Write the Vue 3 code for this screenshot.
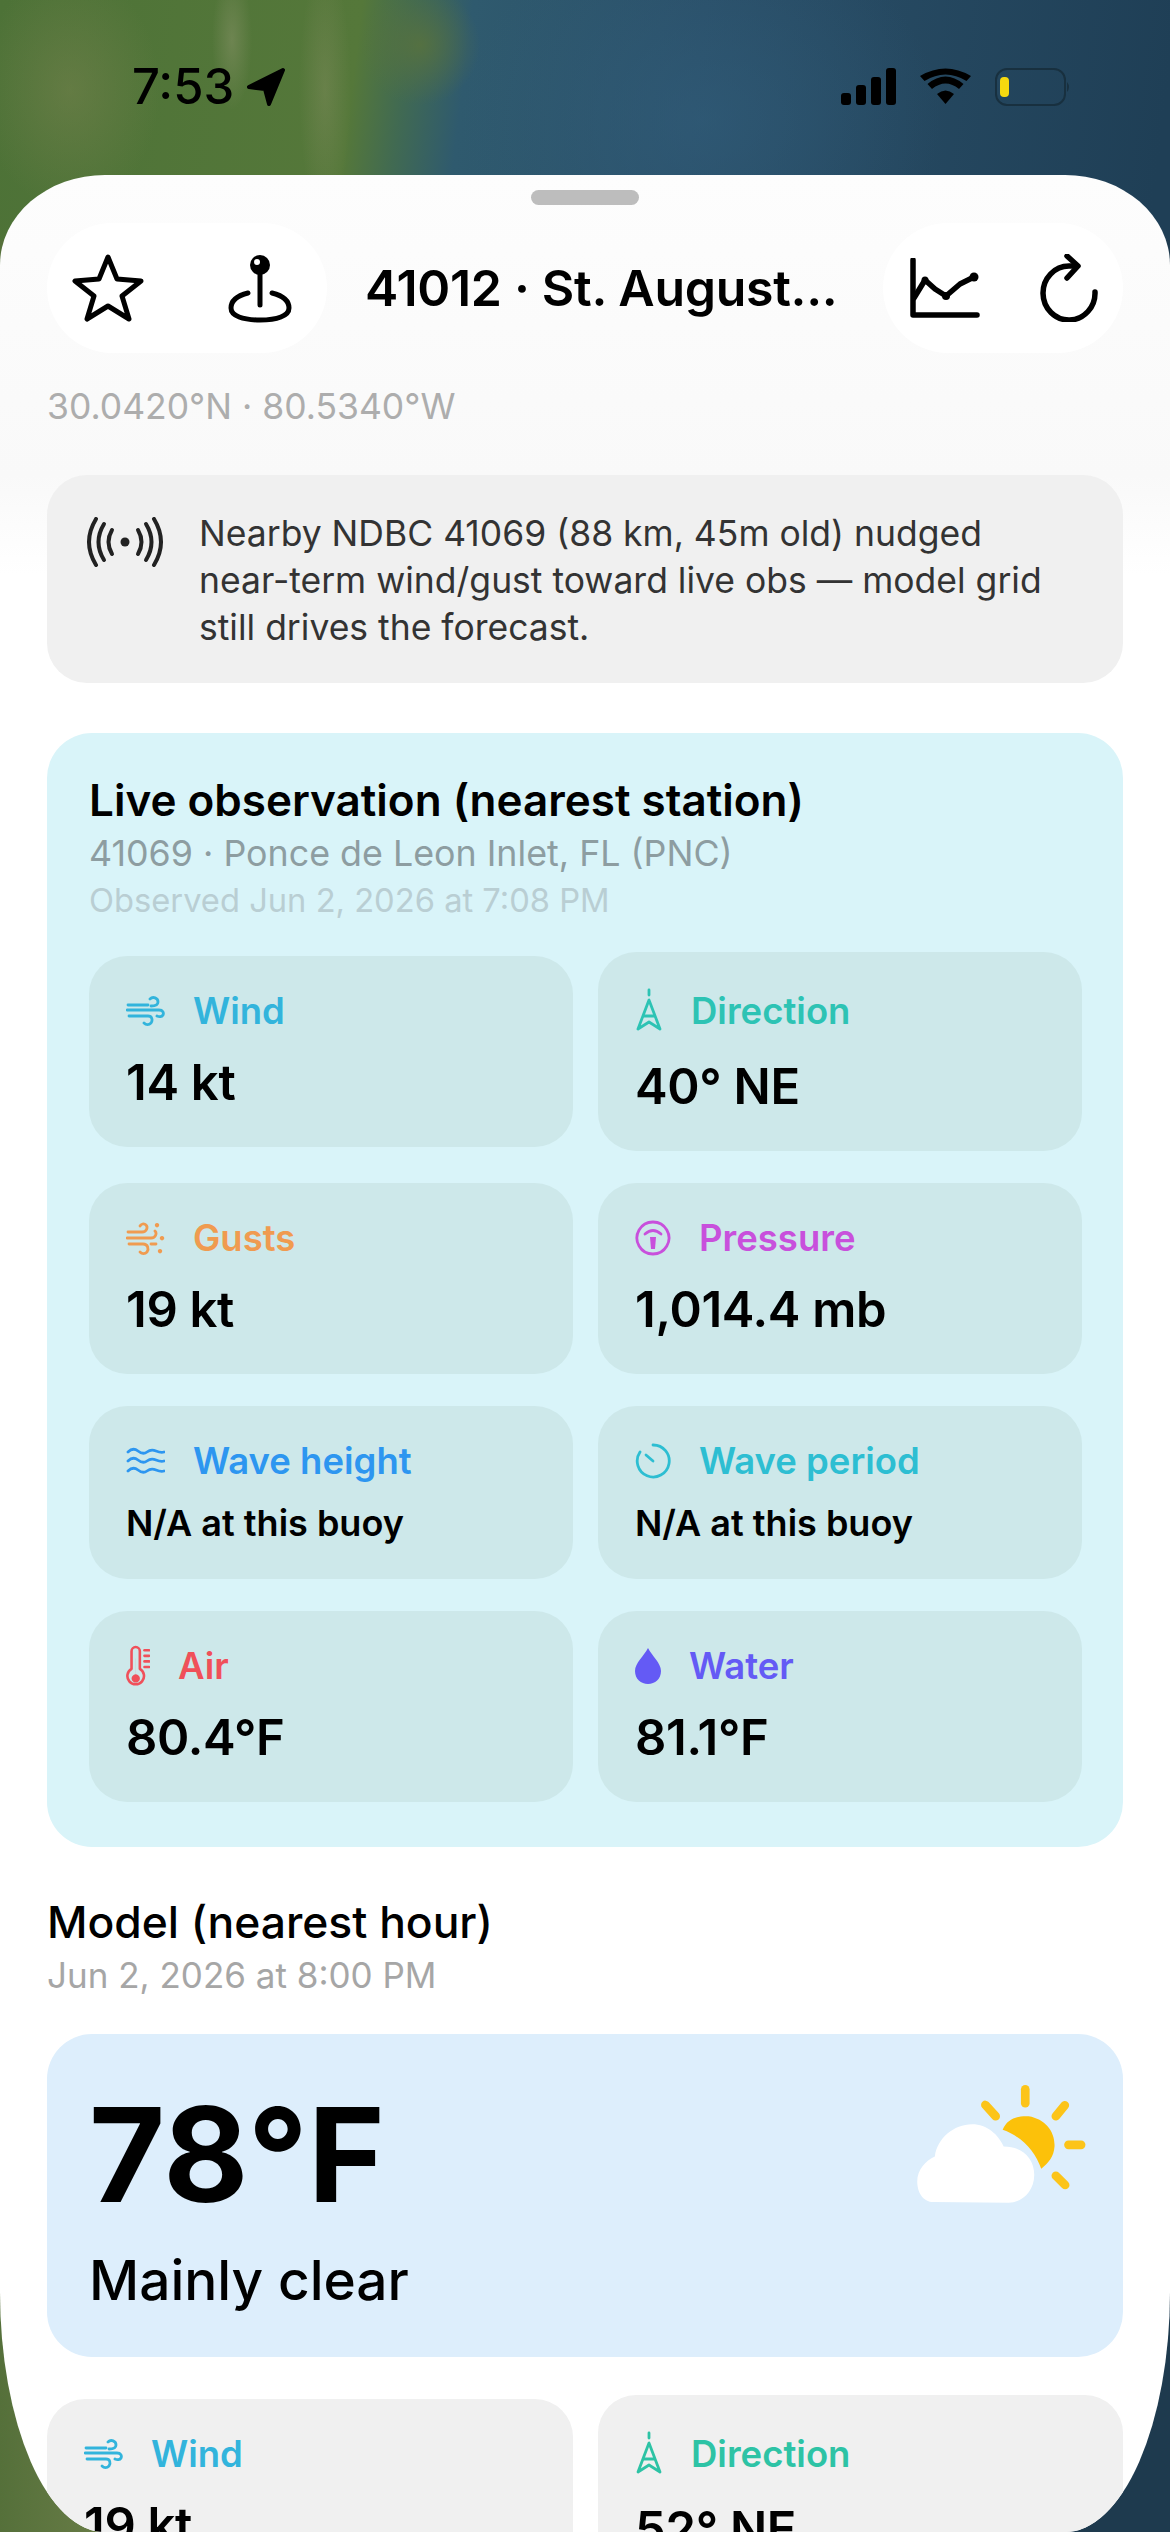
<template>
  <div class="phone">
    <div class="status">
      <div class="clock">
        <span>7:53</span>
        <svg class="arrow" viewBox="0 0 40 40"><path d="M37 3 L3 20 L19 22 L23 37 Z" stroke="#000" stroke-width="4" stroke-linejoin="round" /></svg>
      </div>
      <div class="status-right">
        <svg class="signal" viewBox="0 0 55 37">
          <rect x="0" y="25" width="10" height="12" rx="3" />
          <rect x="15" y="17" width="10" height="20" rx="3" />
          <rect x="30" y="9" width="10" height="28" rx="3" />
          <rect x="45" y="0" width="10" height="37" rx="3" />
        </svg>
        <svg class="wifi" viewBox="0 0 51 36">
          <path d="M25.5 36 L17 26 Q25.5 19 34 26 Z" />
          <path d="M12 20 L7.500 15 Q25.500 0 43.500 15 L39 20 Q25.500 9 12 20 Z" transform="translate(0 1)" />
          <path d="M4.500 12 L0 7 Q25.500 -8 51 7 L46.500 12 Q25.500 -1 4.500 12 Z" transform="translate(0 1)" />
        </svg>
        <svg class="battery" viewBox="0 0 76 38">
          <rect x="1" y="1" width="69" height="36" rx="11" fill="none" stroke="#18303f" stroke-width="2" />
          <rect x="5" y="9" width="9" height="20" rx="4" fill="#f6d90f" />
          <path d="M72 14 Q76 19 72 24 Z" fill="#18303f" />
        </svg>
      </div>
    </div>

    <div class="sheet">
      <div class="handle"></div>

      <div class="header">
        <div class="pill pill-left">
          <svg class="star" viewBox="0 0 72 68" fill="none" stroke="#000" stroke-width="5" stroke-linejoin="round">
            <path d="M36 3 L45 25 L69 27 L50 42 L57 65 L36 52 L15 65 L22 42 L3 27 L27 25 Z" />
          </svg>
          <svg class="pin" viewBox="0 0 64 70" fill="none" stroke="#000" stroke-width="5" stroke-linecap="round">
            <path d="M32 20 V52" />
            <path d="M20 40 C8 43 3 48 3 55 C3 63 15 67 32 67 C49 67 61 63 61 55 C61 48 56 43 44 40" />
            <circle cx="32" cy="12" r="10" fill="#000" stroke="none" />
            <circle cx="29" cy="9" r="3" fill="#fff" stroke="none" />
          </svg>
        </div>
        <div class="title">41012 · St. August...</div>
        <div class="pill pill-right">
          <svg class="chart" viewBox="0 0 70 60" fill="none" stroke="#000" stroke-width="5.500" stroke-linecap="round" stroke-linejoin="round">
            <path d="M3 2 V57 H67" />
            <path d="M4 40 L15 22 L25 31 L36 38 L50 26 L64 19" />
            <circle cx="36" cy="38" r="4" fill="#000" stroke="none" />
            <circle cx="64" cy="19" r="4.500" fill="#000" stroke="none" />
            <circle cx="15" cy="22" r="3.500" fill="#000" stroke="none" />
          </svg>
          <svg class="refresh" viewBox="0 0 58 68" fill="none" stroke="#000" stroke-width="5.500" stroke-linecap="round" stroke-linejoin="round">
            <path d="M55 38 A26 27 0 1 1 29 12 H36" />
            <path d="M27 2 L38 12 L27 24" />
          </svg>
        </div>
      </div>

      <div class="coords">30.0420°N · 80.5340°W</div>

      <div class="notice">
        <svg class="radio" viewBox="0 0 80 50" fill="none" stroke="#222" stroke-width="4" stroke-linecap="round">
          <path d="M11 2 Q-3 25 11 48" />
          <path d="M19 7 Q8 25 19 43" />
          <path d="M27 13 Q20 25 27 37" />
          <path d="M69 2 Q83 25 69 48" />
          <path d="M61 7 Q72 25 61 43" />
          <path d="M53 13 Q60 25 53 37" />
          <circle cx="40" cy="25" r="4.500" fill="#222" stroke="none" />
        </svg>
        <p>Nearby NDBC 41069 (88 km, 45m old) nudged near-term wind/gust toward live obs — model grid still drives the forecast.</p>
      </div>

      <section class="live">
        <h2>Live observation (nearest station)</h2>
        <div class="live-sub">41069 · Ponce de Leon Inlet, FL (PNC)</div>
        <div class="live-time">Observed Jun 2, 2026 at 7:08 PM</div>
        <div class="grid">
          <div v-for="t in liveTiles" :key="t.label" class="tile" :class="{ small: t.small }">
            <div class="tile-label" :style="{ color: t.color }">
              <svg :viewBox="icons[t.icon].box" :style="{ width: icons[t.icon].w + 'px', height: icons[t.icon].h + 'px' }" fill="none" stroke="currentColor" stroke-width="2.800" stroke-linecap="round" stroke-linejoin="round">
                <path v-for="d in icons[t.icon].lines" :key="d" :d="d" />
                <path v-for="d in icons[t.icon].solid" :key="d" :d="d" fill="currentColor" stroke="none" />
              </svg>
              <span>{{ t.label }}</span>
            </div>
            <div class="tile-value">{{ t.value }}</div>
          </div>
        </div>
      </section>

      <h2 class="model-title">Model (nearest hour)</h2>
      <div class="model-time">Jun 2, 2026 at 8:00 PM</div>

      <div class="hero">
        <div>
          <div class="temp">78°F</div>
          <div class="cond">Mainly clear</div>
        </div>
        <svg class="sky" viewBox="175 130 510 355">
          <g stroke="#fcc419" stroke-width="26" stroke-linecap="round">
            <path d="M500 143 V185" />
            <path d="M380 190 L411 224" />
            <path d="M619 191 L592 224" />
            <path d="M630 310 H668" />
            <path d="M592 403 L620 431" />
          </g>
          <path d="M432 265 C445 230 480 222 510 224 C560 232 590 270 588 315 C586 345 570 365 548 382 C530 330 490 285 432 265 Z" fill="#fcc10a" />
          <path d="M225 482 C190 482 175 450 175 420 C175 385 200 358 228 345 C235 290 285 248 340 248 C385 248 420 280 435 315 C490 315 527 350 527 400 C527 450 490 484 450 484 Z" fill="#fff" />
        </svg>
      </div>

      <div class="grid grid-model">
        <div v-for="t in modelTiles" :key="t.label" class="tile tile-grey">
          <div class="tile-label" :style="{ color: t.color }">
            <svg :viewBox="icons[t.icon].box" :style="{ width: icons[t.icon].w + 'px', height: icons[t.icon].h + 'px' }" fill="none" stroke="currentColor" stroke-width="2.800" stroke-linecap="round" stroke-linejoin="round">
              <path v-for="d in icons[t.icon].lines" :key="d" :d="d" />
              <path v-for="d in icons[t.icon].solid" :key="d" :d="d" fill="currentColor" stroke="none" />
            </svg>
            <span>{{ t.label }}</span>
          </div>
          <div class="tile-value">{{ t.value }}</div>
        </div>
      </div>
    </div>
  </div>
</template>

<script setup>
// icon drawings for the tiles, keyed by name
const icons = {
  wind: {
    box: '0 0 39 30', w: 39, h: 30,
    lines: ['M2 9 H22', 'M24 3 C27 0 32 2 32 6 C32 9 28 10 25 10', 'M1 14 H33 C37 14 38 17 37 19 C36 21 33 21 31 20', 'M3 20 H22 C26 20 27 24 25 27 C23 29 20 29 18 27'],
    solid: [],
  },
  gusts: {
    box: '0 0 39 36', w: 39, h: 36,
    lines: ['M2 12 H16 C21 12 22 7 20 5 C18 3 15 4 14 6', 'M1 18 H25 C30 18 31 13 29 11', 'M3 24 H17 C22 24 23 29 21 32 C19 34 16 34 14 32', 'M25 24 H30'],
    solid: ['M31 3 a2.200 2.200 0 1 0 .01 0 Z', 'M36 16 a2.200 2.200 0 1 0 .01 0 Z', 'M34 29 a2.200 2.200 0 1 0 .01 0 Z'],
  },
  direction: {
    box: '0 -4 28 52', w: 28, h: 52,
    lines: ['M14 1 V6', 'M14 11 L3 40 L14 33 L25 40 Z', 'M9 27 H19'],
    solid: [],
  },
  pressure: {
    box: '0 0 36 36', w: 36, h: 36,
    lines: ['M18 2 A16 16 0 1 1 17.900 2 Z', 'M10 14 Q18 7 26 14'],
    solid: ['M15 17 H21 L20 29 H16 Z'],
  },
  wave: {
    box: '0 0 39 30', w: 39, h: 30,
    lines: ['M2 6 Q7 1 12 5 T21 6 T30 5 T38 6', 'M2 15 Q7 10 12 14 T21 15 T30 14 T38 15', 'M2 25 Q7 20 12 24 T21 25 T30 24 T38 25'],
    solid: [],
  },
  period: {
    box: '0 0 36 38', w: 36, h: 38,
    lines: ['M18 3 A16 16 0 1 1 5 10', 'M18 19 L11 13'],
    solid: [],
  },
  air: {
    box: '0 0 26 44', w: 24, h: 44,
    lines: ['M6 6 A4.500 4.500 0 0 1 15 6 V25 A9 9 0 1 1 6 25 Z', 'M20 5 H25', 'M20 11 H25', 'M20 17 H25', 'M20 23 H25'],
    solid: ['M10.500 14 V31 A4.500 4.500 0 1 0 10.600 31 V14 Z'],
  },
  water: {
    box: '0 0 26 36', w: 26, h: 36,
    lines: [],
    solid: ['M13 0 C17 8 26 15 26 23 C26 31 20 36 13 36 C6 36 0 31 0 23 C0 15 9 8 13 0 Z'],
  },
}

const liveTiles = [
  { label: 'Wind', value: '14 kt', icon: 'wind', color: '#32b4dc' },
  { label: 'Direction', value: '40° NE', icon: 'direction', color: '#2dc3b4' },
  { label: 'Gusts', value: '19 kt', icon: 'gusts', color: '#f09b50' },
  { label: 'Pressure', value: '1,014.4 mb', icon: 'pressure', color: '#c850dc' },
  { label: 'Wave height', value: 'N/A at this buoy', icon: 'wave', color: '#2d96f0', small: true },
  { label: 'Wave period', value: 'N/A at this buoy', icon: 'period', color: '#2dbed2', small: true },
  { label: 'Air', value: '80.4°F', icon: 'air', color: '#f0505a' },
  { label: 'Water', value: '81.1°F', icon: 'water', color: '#645af5' },
]

const modelTiles = [
  { label: 'Wind', value: '19 kt', icon: 'wind', color: '#32b4dc' },
  { label: 'Direction', value: '52° NE', icon: 'direction', color: '#2dc3a5' },
]
</script>

<style>
body {
  margin: 0;
}
</style>

<style scoped>
.phone {
  width: 1170px;
  height: 2532px;
  overflow: hidden;
  font-family: Inter, "Noto Sans", sans-serif;
  color: #000;
  /* satellite map behind the sheet: coast at the top, green and dark water at the bottom corners */
  background:
    radial-gradient(ellipse 90px 120px at 70px 90px, rgba(130, 135, 85, 0.4), transparent),
    radial-gradient(ellipse 26px 130px at 325px 90px, rgba(150, 150, 110, 0.3), transparent),
    radial-gradient(ellipse 20px 70px at 232px 40px, rgba(160, 160, 125, 0.35), transparent),
    radial-gradient(ellipse 60px 60px at 420px 45px, rgba(90, 115, 60, 0.8), transparent),
    radial-gradient(ellipse 240px 200px at 700px 120px, rgba(50, 95, 125, 0.55), transparent),
    linear-gradient(97deg, #4d7237 0, #55783a 360px, #416a52 410px, #2f5a6e 470px, #2a4f68 700px, #1f3f56 1170px) 0 0 / 1170px 240px no-repeat,
    linear-gradient(90deg, #55703a 0, #6d7f4a 130px, #1e3a4e 131px, #1e3a4e 100%);
}

.status {
  height: 175px;
  box-sizing: border-box;
  padding: 66px 99px 0 132px;
  display: flex;
  justify-content: space-between;
  align-items: flex-start;
}

.clock {
  display: flex;
  align-items: center;
  gap: 12px;
  font-size: 49px;
  line-height: 42px;
  font-weight: 500;
  letter-spacing: 0;
}

.arrow {
  width: 40px;
  height: 40px;
}

.status-right {
  display: flex;
  align-items: flex-start;
  gap: 24px;
  padding-top: 2px;
}

.signal {
  width: 55px;
  height: 37px;
}

.wifi {
  width: 51px;
  height: 36px;
}

.battery {
  width: 76px;
  height: 38px;
}

.sheet {
  height: 2357px;
  box-sizing: border-box;
  padding: 15px 47px 0;
  overflow: hidden;
  border-radius: 105px 105px 105px 105px / 90px 90px 240px 240px;
  background: linear-gradient(#fdfdfd, #f9f9f9 300px, #ffffff 400px);
}

.handle {
  width: 108px;
  height: 15px;
  margin: 0 auto 18px;
  border-radius: 8px;
  background: #bdbdbd;
}

.header {
  display: flex;
  align-items: center;
  height: 130px;
}

.pill {
  height: 130px;
  box-sizing: border-box;
  display: flex;
  align-items: center;
  justify-content: space-between;
  border-radius: 65px;
  background: #fff;
}

.pill-left {
  width: 280px;
  padding: 0 35px 0 25px;
}

.pill-right {
  width: 240px;
  padding: 0 25px 0 27px;
}

.star {
  width: 72px;
  height: 68px;
}

.pin {
  width: 64px;
  height: 70px;
}

.chart {
  width: 70px;
  height: 60px;
}

.refresh {
  width: 58px;
  height: 68px;
}

.title {
  flex: 1;
  padding-left: 38px;
  font-size: 50px;
  font-weight: 600;
  white-space: nowrap;
  letter-spacing: -0.3px;
}

.coords {
  margin-top: 32px;
  font-size: 35.5px;
  line-height: 44px;
  color: #adadad;
}

.notice {
  display: flex;
  gap: 34px;
  margin-top: 46px;
  height: 208px;
  box-sizing: border-box;
  padding: 42px 38px 0;
  border-radius: 40px;
  background: #f0f0f0;
}

.radio {
  flex: none;
  width: 80px;
  height: 50px;
}

.notice p {
  width: 860px;
  margin: -7px 0 0;
  font-size: 35.5px;
  line-height: 47px;
  color: #333;
}

.live {
  margin-top: 50px;
  padding: 41px 41px 45px 42px;
  border-radius: 45px;
  background: #d9f4f9;
}

h2 {
  margin: 0;
  font-size: 44px;
  line-height: 52px;
  font-weight: 600;
}

.live-sub {
  margin-top: 5px;
  font-size: 35.8px;
  line-height: 44px;
  color: #8d9da1;
}

.live-time {
  margin-top: 3px;
  font-size: 32.7px;
  line-height: 44px;
  color: #b9ced3;
}

.grid {
  display: grid;
  grid-template-columns: 484px 484px;
  column-gap: 25px;
  row-gap: 32px;
  align-items: center;
  margin-top: 30px;
}

.tile {
  padding: 33px 37px 36px;
  border-radius: 38px;
  background: #cde8ea;
}

.tile-grey {
  background: #f0f0f0;
}

.tile-label {
  display: flex;
  align-items: center;
  gap: 28px;
  min-height: 44px;
  font-size: 36.5px;
  line-height: 44px;
  font-weight: 600;
}

.tile-value {
  margin-top: 22px;
  font-size: 49px;
  line-height: 56px;
  font-weight: 600;
  letter-spacing: -0.3px;
}

.small .tile-value {
  margin-top: 18px;
  font-size: 36px;
  line-height: 44px;
  letter-spacing: 0;
}

.small {
  padding-bottom: 34px;
}

.model-title {
  margin-top: 49px;
  font-size: 44.4px;
  font-weight: 500;
}

.model-time {
  margin-top: 5px;
  font-size: 35px;
  line-height: 44px;
  color: #a6a6a6;
}

.hero {
  display: flex;
  justify-content: space-between;
  align-items: flex-start;
  margin-top: 37px;
  padding: 54px 36px 42px 42px;
  border-radius: 45px;
  background: #ddeefc;
}

.temp {
  font-size: 131px;
  line-height: 134px;
  font-weight: 700;
}

.cond {
  margin-top: 23px;
  font-size: 55px;
  line-height: 70px;
  font-weight: 500;
}

.sky {
  width: 170px;
  height: 118px;
  margin-top: -3px;
}

.grid-model {
  grid-template-columns: 526px 525px;
  margin-top: 38px;
}
</style>
